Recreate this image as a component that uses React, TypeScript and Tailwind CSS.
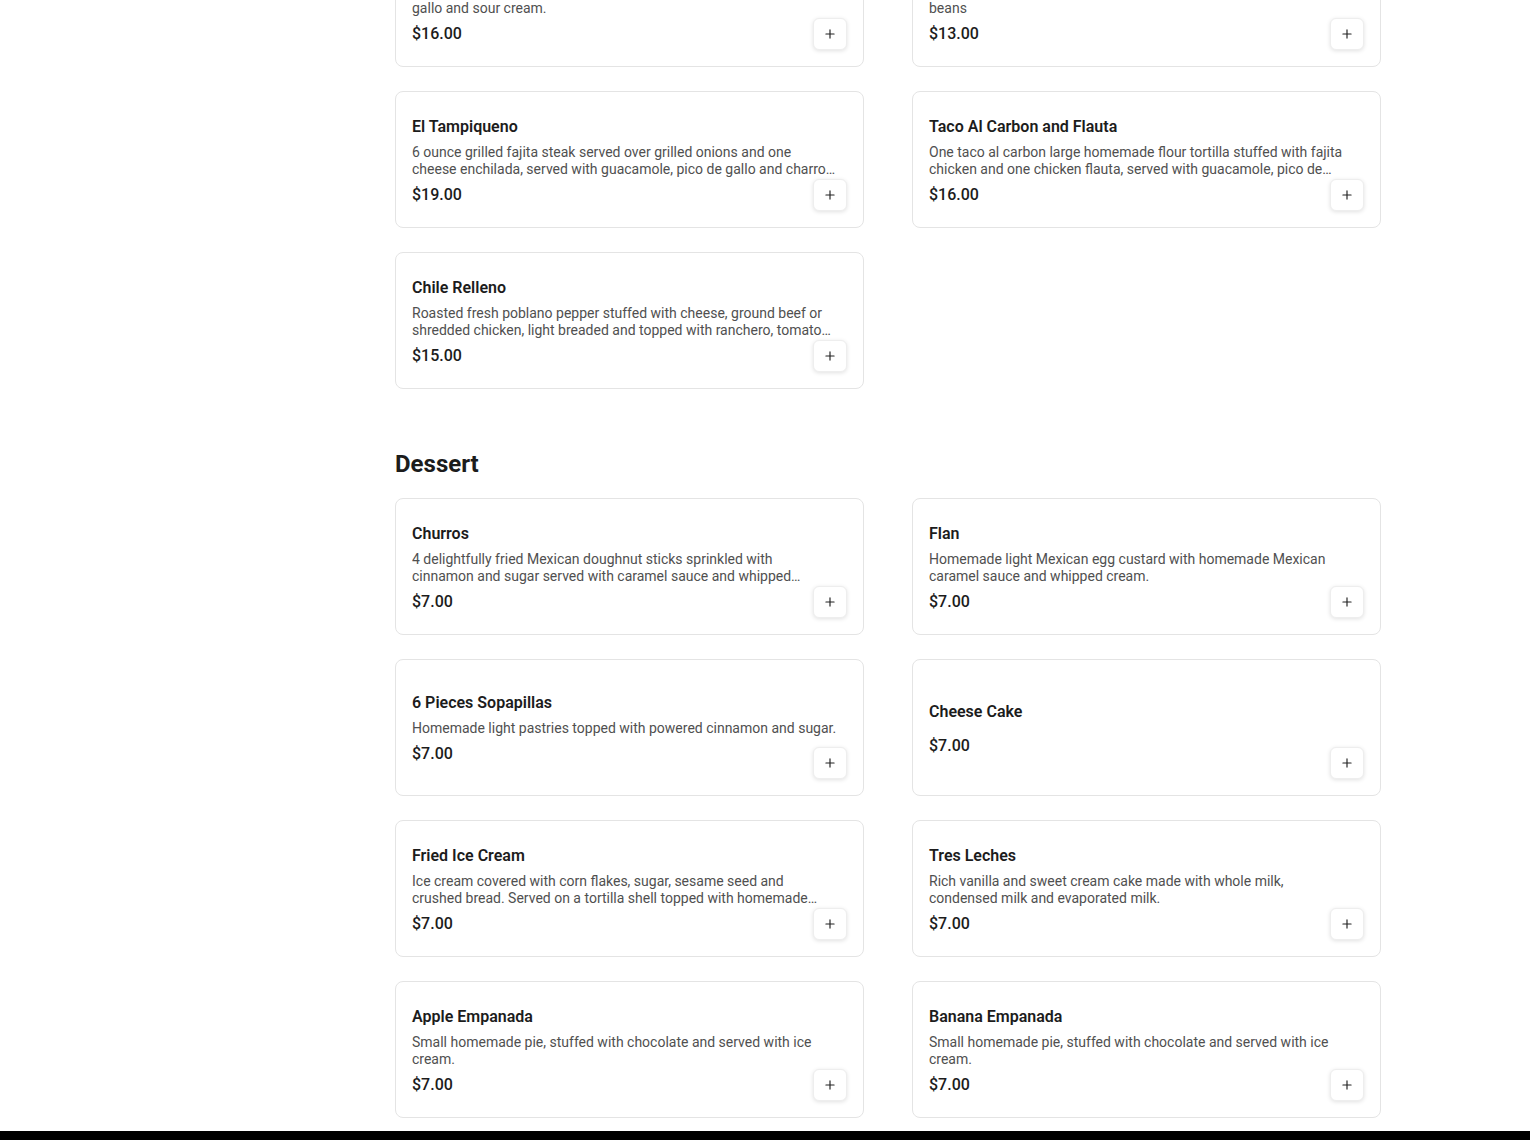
import type { ReactNode } from 'react';
import { Plus } from 'lucide-react';

type Item = { name: string; desc?: ReactNode; price: string };

const mains: Item[] = [
  {
    name: 'Enchiladas Rancheras',
    desc: (
      <>
        Three cheese enchiladas topped with ranchero sauce, pico de
        <br />
        gallo and sour cream.
      </>
    ),
    price: '$16.00',
  },
  {
    name: 'Taco Plate',
    desc: (
      <>
        Three crispy tacos with ground beef, served with rice and
        <br />
        beans
      </>
    ),
    price: '$13.00',
  },
  {
    name: 'El Tampiqueno',
    desc: '6 ounce grilled fajita steak served over grilled onions and one cheese enchilada, served with guacamole, pico de gallo and charro beans.',
    price: '$19.00',
  },
  {
    name: 'Taco Al Carbon and Flauta',
    desc: 'One taco al carbon large homemade flour tortilla stuffed with fajita chicken and one chicken flauta, served with guacamole, pico de gallo and sour cream.',
    price: '$16.00',
  },
  {
    name: 'Chile Relleno',
    desc: 'Roasted fresh poblano pepper stuffed with cheese, ground beef or shredded chicken, light breaded and topped with ranchero, tomato sauce and cheese.',
    price: '$15.00',
  },
];

const desserts: Item[] = [
  {
    name: 'Churros',
    desc: '4 delightfully fried Mexican doughnut sticks sprinkled with cinnamon and sugar served with caramel sauce and whipped cream.',
    price: '$7.00',
  },
  {
    name: 'Flan',
    desc: 'Homemade light Mexican egg custard with homemade Mexican caramel sauce and whipped cream.',
    price: '$7.00',
  },
  {
    name: '6 Pieces Sopapillas',
    desc: 'Homemade light pastries topped with powered cinnamon and sugar.',
    price: '$7.00',
  },
  { name: 'Cheese Cake', price: '$7.00' },
  {
    name: 'Fried Ice Cream',
    desc: 'Ice cream covered with corn flakes, sugar, sesame seed and crushed bread. Served on a tortilla shell topped with homemade whipped cream.',
    price: '$7.00',
  },
  {
    name: 'Tres Leches',
    desc: 'Rich vanilla and sweet cream cake made with whole milk, condensed milk and evaporated milk.',
    price: '$7.00',
  },
  {
    name: 'Apple Empanada',
    desc: 'Small homemade pie, stuffed with chocolate and served with ice cream.',
    price: '$7.00',
  },
  {
    name: 'Banana Empanada',
    desc: 'Small homemade pie, stuffed with chocolate and served with ice cream.',
    price: '$7.00',
  },
];

function MenuCard({ item }: { item: Item }) {
  return (
    <div className="relative flex h-[137px] rounded-lg border border-[#e4e4e4] bg-white px-4 pt-[18px] pb-4">
      <div className="flex min-w-0 flex-1 flex-col justify-center gap-[5px] pr-[10px]">
        <p className="text-base font-semibold leading-6 text-[#1c1c1c]">{item.name}</p>
        <p className="line-clamp-2 text-[14px] leading-[17px] text-[#505050]">{item.desc}</p>
        <p className="text-base font-medium leading-6 text-[#1c1c1c]">{item.price}</p>
      </div>
      <button className="absolute right-4 bottom-4 flex h-8 w-[34px] items-center justify-center rounded-md border border-[#eeeeee] bg-white text-[#222] shadow-[0_1px_4px_rgba(0,0,0,0.12)]">
        <Plus size={14} strokeWidth={2} />
      </button>
    </div>
  );
}

function Section({ title, items }: { title?: string; items: Item[] }) {
  return (
    <section>
      {title && (
        <h2 className="mb-4 text-2xl font-bold leading-9 text-[#1c1c1c]">{title}</h2>
      )}
      <div className="grid grid-cols-2 gap-x-12 gap-y-6">
        {items.map((it) => (
          <MenuCard key={it.name} item={it} />
        ))}
      </div>
    </section>
  );
}

export default function App() {
  return (
    <div
      className="flex h-[1140px] flex-col overflow-hidden bg-white"
      style={{ fontFamily: 'Roboto, "Noto Sans", Arial, sans-serif' }}
    >
      <div className="flex flex-1">
        <aside className="w-[395px] shrink-0" />
        <main className="mt-[-70px] flex w-[986px] flex-col gap-[57px]">
          <Section items={mains} />
          <Section title="Dessert" items={desserts} />
        </main>
      </div>
      <footer className="h-[9px] shrink-0 bg-black" />
    </div>
  );
}
